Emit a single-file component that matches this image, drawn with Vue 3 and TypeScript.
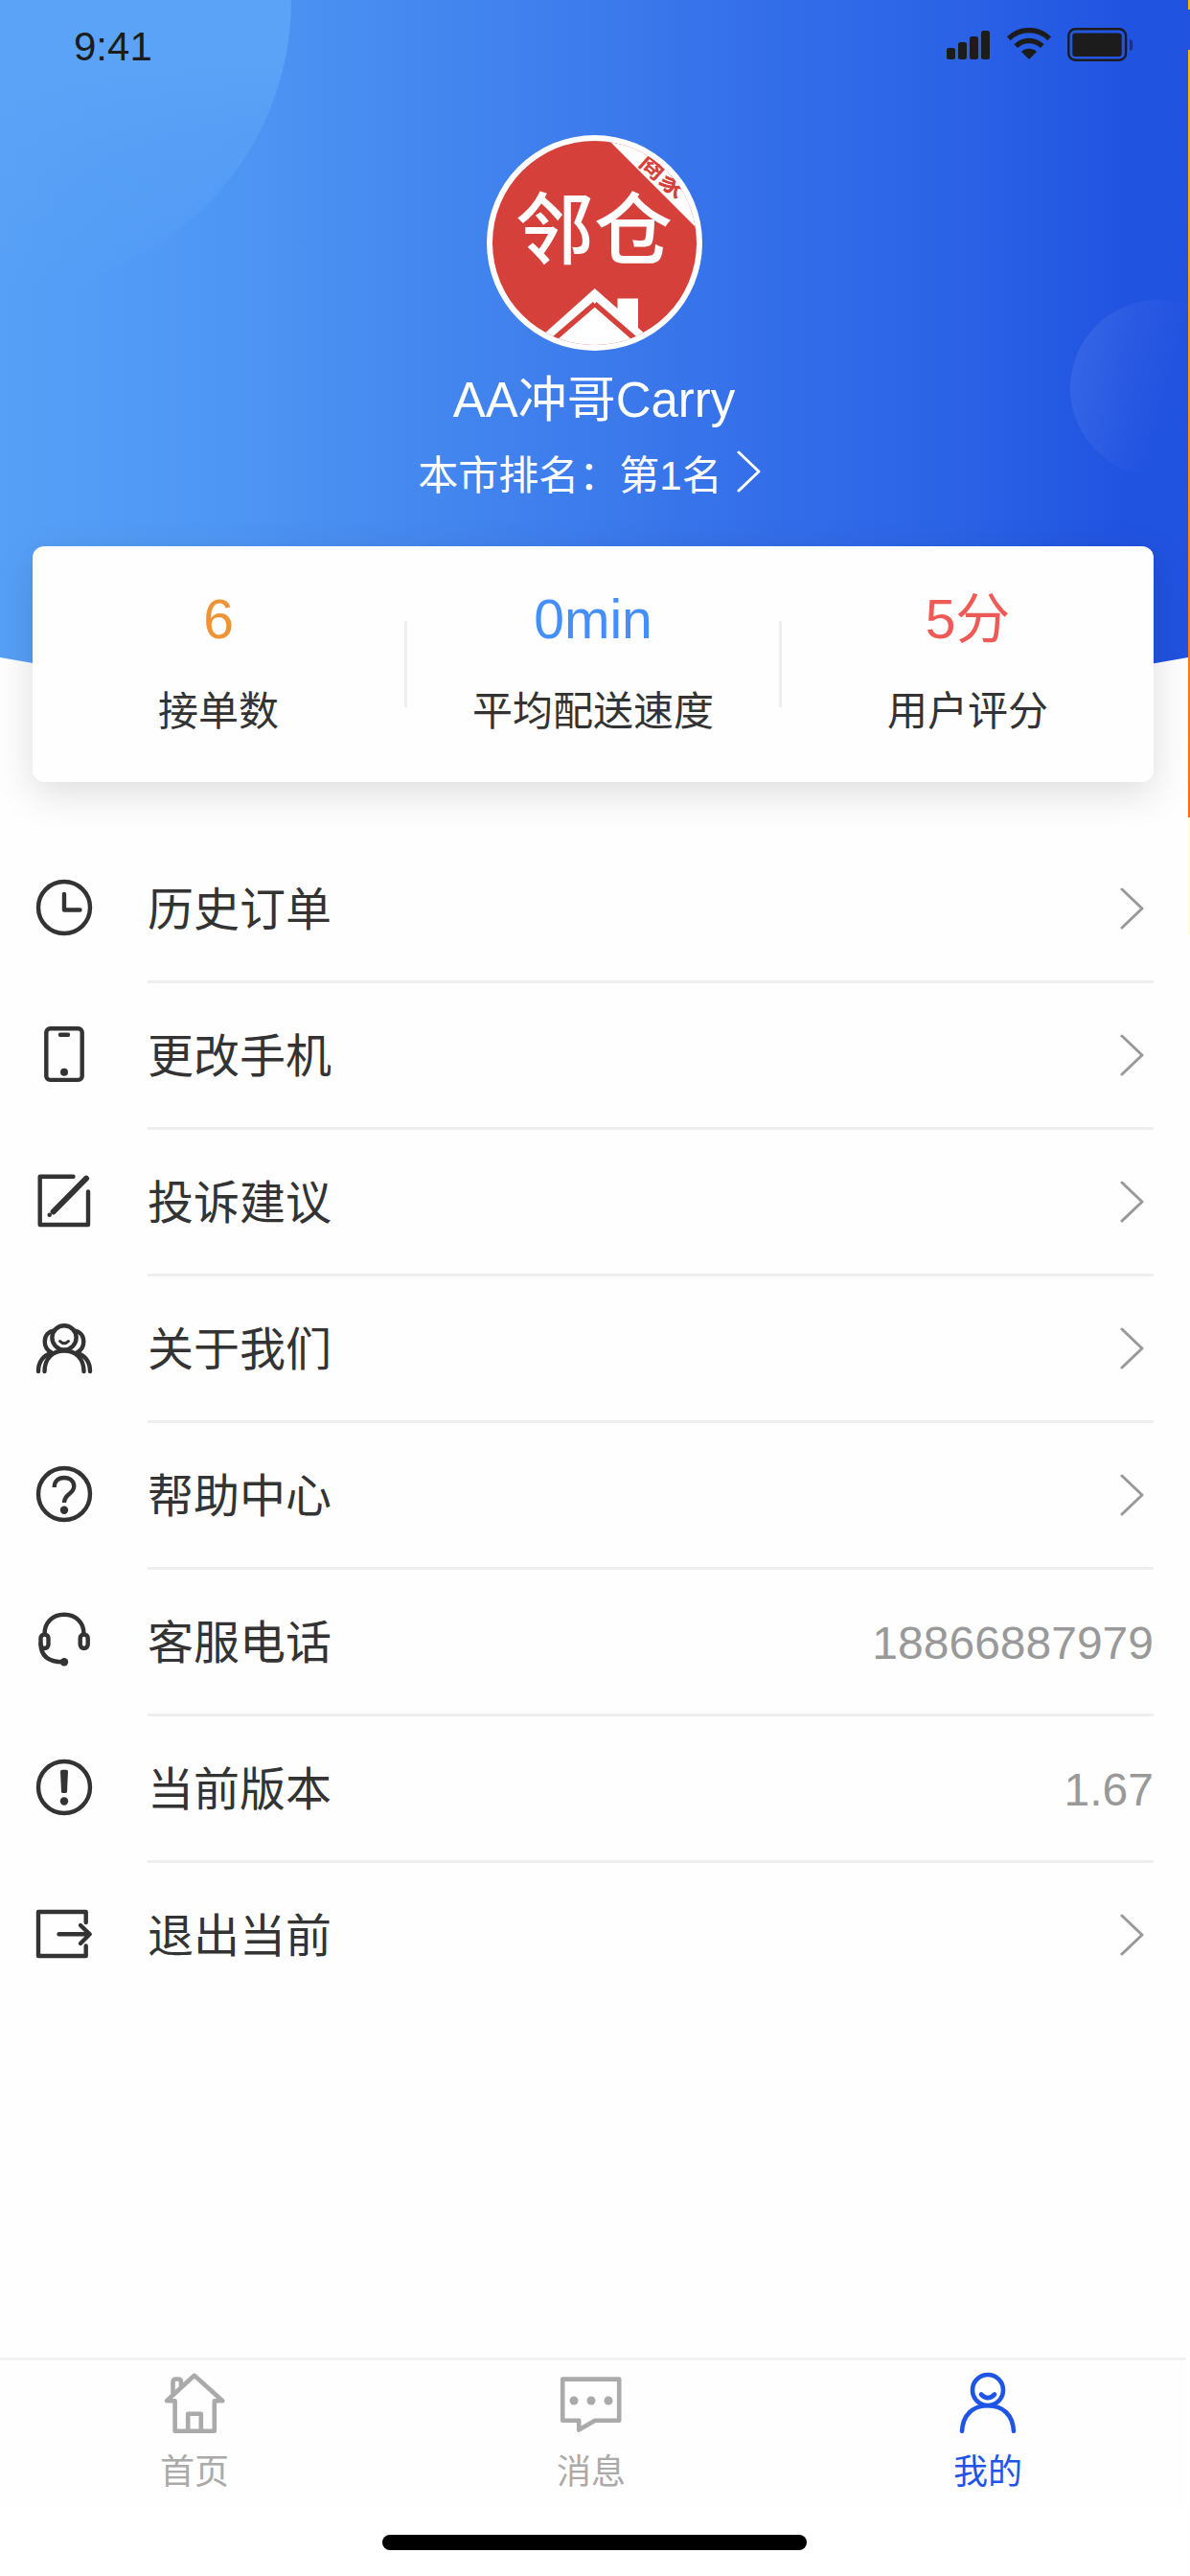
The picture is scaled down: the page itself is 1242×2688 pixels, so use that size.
<script setup lang="ts">
import { ref } from 'vue'

interface Stat {
  value: string
  label: string
  tone: string
}

interface MenuItem {
  icon: string
  label: string
  value?: string
}

interface Tab {
  icon: string
  label: string
}

const stats: Stat[] = [
  { value: '6', label: '接单数', tone: 'orange' },
  { value: '0min', label: '平均配送速度', tone: 'blue' },
  { value: '5分', label: '用户评分', tone: 'red' },
]

const menu: MenuItem[] = [
  { icon: 'clock', label: '历史订单' },
  { icon: 'mobile', label: '更改手机' },
  { icon: 'edit', label: '投诉建议' },
  { icon: 'people', label: '关于我们' },
  { icon: 'help', label: '帮助中心' },
  { icon: 'headset', label: '客服电话', value: '18866887979' },
  { icon: 'notice', label: '当前版本', value: '1.67' },
  { icon: 'exit', label: '退出当前' },
]

const tabs: Tab[] = [
  { icon: 'home', label: '首页' },
  { icon: 'message', label: '消息' },
  { icon: 'mine', label: '我的' },
]

const activeTab = ref('mine')
</script>

<template>
  <div class="page">
    <svg class="backdrop" viewBox="0 0 1240 745" preserveAspectRatio="none" aria-hidden="true">
      <defs>
        <linearGradient id="sky" x1="0" y1="0" x2="1" y2="0">
          <stop offset="0" stop-color="#57a0f7" />
          <stop offset="0.18" stop-color="#4f97f4" />
          <stop offset="0.4" stop-color="#4284ee" />
          <stop offset="0.6" stop-color="#3672ea" />
          <stop offset="0.8" stop-color="#2b63e6" />
          <stop offset="0.95" stop-color="#2153e1" />
          <stop offset="1" stop-color="#2152e0" />
        </linearGradient>
        <linearGradient id="bubble" x1="0" y1="0.3" x2="1" y2="0.6">
          <stop offset="0" stop-color="#ffffff" stop-opacity="0.08" />
          <stop offset="0.6" stop-color="#ffffff" stop-opacity="0" />
        </linearGradient>
        <linearGradient id="corner" x1="0" y1="0" x2="0" y2="1">
          <stop offset="0.6" stop-color="#5ba3f7" />
          <stop offset="1" stop-color="#5ba3f7" stop-opacity="0" />
        </linearGradient>
      </defs>
      <path d="M0 0H1240V686Q620 800 0 686Z" fill="url(#sky)" />
      <circle cx="0" cy="0" r="304" fill="url(#corner)" />
      <circle cx="1209" cy="405" r="92" fill="url(#bubble)" />
    </svg>
    <div class="edge" aria-hidden="true"></div>

    <header class="profile">
      <div class="status">
        <span class="time">9:41</span>
        <div class="signals">
          <svg width="46" height="36" viewBox="0 0 46 36" fill="#1c1c1c" aria-hidden="true">
            <rect x="0" y="21" width="9" height="12" rx="2.5" />
            <rect x="12" y="15" width="9" height="18" rx="2.5" />
            <rect x="24" y="9" width="9" height="24" rx="2.5" />
            <rect x="36" y="3" width="9" height="30" rx="2.5" />
          </svg>
          <svg width="48" height="36" viewBox="0 0 48 36" fill="none" stroke="#1c1c1c" stroke-width="5.4" aria-hidden="true">
            <path d="M2.8 11.2A30.5 30.5 0 0 1 45.2 11.2" />
            <path d="M10.2 19.2A19.5 19.5 0 0 1 37.8 19.2" />
            <path d="M24 33L16 25A11.3 11.3 0 0 1 32 25Z" fill="#1c1c1c" stroke="none" />
          </svg>
          <svg width="70" height="36" viewBox="0 0 70 36" aria-hidden="true">
            <rect x="1.3" y="1.3" width="59.8" height="32.4" rx="7" fill="none" stroke="#1c1c1c" stroke-width="2.4" />
            <rect x="5.3" y="5.6" width="51.4" height="24.4" rx="3" fill="#1c1c1c" />
            <path d="M65 12Q68 12.5 68 15V21Q68 23.5 65 24Z" fill="#1c1c1c" fill-opacity="0.6" />
          </svg>
        </div>
      </div>

      <svg class="avatar" viewBox="0 0 225 225" role="img" aria-label="邻仓商家">
        <defs>
          <clipPath id="face"><circle cx="112.5" cy="112.5" r="106.5" /></clipPath>
        </defs>
        <circle cx="112.5" cy="112.5" r="112.5" fill="#fff" />
        <g clip-path="url(#face)">
          <rect width="225" height="225" fill="#d5403b" />
          <path d="M122 0L225 103V0Z" fill="#fff" />
          <text class="ribbon" transform="translate(184 42) rotate(42)" x="0" y="9">商家</text>
          <text class="brand" x="112" y="128">邻仓</text>
          <path d="M112.7 160L136.5 181V170.5H158V201L186 226H39Z" fill="#fff" />
          <path d="M112.7 176L56 225M112.7 176L169 225" fill="none" stroke="#d5403b" stroke-width="5.6" />
        </g>
      </svg>

      <h1 class="name">AA冲哥Carry</h1>
      <button class="rank" type="button">
        <span>本市排名：第1名</span>
        <svg class="chevron" viewBox="0 0 48 44" aria-hidden="true"><path d="M15 2L36 22L15 42" /></svg>
      </button>
    </header>

    <section class="stats">
      <template v-for="(stat, i) in stats" :key="stat.label">
        <span v-if="i > 0" class="rule"></span>
        <div class="stat">
          <strong :class="stat.tone">{{ stat.value }}</strong>
          <span>{{ stat.label }}</span>
        </div>
      </template>
    </section>

    <ul class="menu">
      <li v-for="item in menu" :key="item.label">
        <button class="row" type="button">
          <svg class="icon" viewBox="0 0 66 66" aria-hidden="true">
            <g v-if="item.icon === 'clock'">
              <circle cx="33" cy="32" r="27" />
              <path d="M33 18V34.5H49.5" />
            </g>
            <g v-else-if="item.icon === 'mobile'">
              <rect x="14.3" y="5.3" width="37.4" height="53.6" rx="4" />
              <path d="M29 11.8H37" />
              <circle class="dot" cx="33" cy="50.7" r="4" />
            </g>
            <g v-else-if="item.icon === 'edit'">
              <path d="M42.5 6.8H7.7V57H58V22.5" />
              <path d="M56 8.7L21.7 43.3" stroke-width="6" />
              <circle class="dot" cx="17.7" cy="46.7" r="2.3" />
            </g>
            <g v-else-if="item.icon === 'people'">
              <circle cx="33" cy="21.8" r="12.6" />
              <path d="M28.5 25.5Q33 30 37.5 25.5" stroke-width="3" />
              <path d="M12.5 57C12.5 43.5 21 35.5 33 35.5S53.5 43.5 53.5 57" />
              <path d="M22.5 14.3C16.5 15.3 12.7 20 12.7 26C12.7 31 15 35 20 37.5C11 40.5 6 47 6 57" />
              <path d="M43.5 14.3C49.5 15.3 53.3 20 53.3 26C53.3 31 51 35 46 37.5C55 40.5 60 47 60 57" />
            </g>
            <g v-else-if="item.icon === 'help'">
              <circle cx="33" cy="32" r="27" />
              <path d="M22.7 25C22.7 18.5 27 15 33 15C39 15 43.2 18.5 43.2 24C43.2 32 33 31.5 33 41" stroke-linecap="butt" />
              <circle class="dot" cx="33" cy="48.7" r="4.2" />
            </g>
            <g v-else-if="item.icon === 'headset'">
              <path d="M12.5 25C12.5 13 21 4.8 33 4.8S53.5 13 53.5 25" />
              <rect x="8.5" y="25.5" width="8" height="14.5" rx="4" />
              <rect x="49.7" y="25.5" width="8" height="14.5" rx="4" />
              <path d="M8.5 35C8.5 48 17 54.3 32 54.3" />
              <circle class="dot" cx="33" cy="54.3" r="4.2" />
            </g>
            <g v-else-if="item.icon === 'notice'">
              <circle cx="33" cy="32" r="27" />
              <path class="dot" d="M29 15.5Q29 13.7 31 13.7H35Q37 13.7 37 15.5L36 36.5Q35.8 38 34.5 38H31.5Q30.2 38 30 36.5Z" />
              <circle class="dot" cx="33" cy="46.5" r="4.2" />
            </g>
            <g v-else>
              <path d="M55.7 20V9H6V55H55.7V44.5" />
              <path d="M27.5 32.3H59.5M50 23L59.7 32.3L50 42" />
            </g>
          </svg>
          <span class="label">{{ item.label }}</span>
          <span v-if="item.value" class="value">{{ item.value }}</span>
          <svg v-else class="chevron" viewBox="0 0 48 44" aria-hidden="true"><path d="M15 2L36 22L15 42" /></svg>
        </button>
      </li>
    </ul>

    <footer class="footer">
      <nav class="tabs">
        <button
          v-for="tab in tabs"
          :key="tab.icon"
          type="button"
          class="tab"
          :class="{ active: tab.icon === activeTab }"
          @click="activeTab = tab.icon"
        >
          <svg viewBox="0 0 66 66" aria-hidden="true">
            <g v-if="tab.icon === 'home'">
              <path d="M32.8 3.8L4 30.3H12.6V61.8H53.8V30.3H62.3Z" />
              <path d="M10.5 24V11Q10.5 7.5 13.5 7.5H16Q19 7.5 19 11V15M26.2 61V43.8H39.8V61" />
            </g>
            <g v-else-if="tab.icon === 'message'">
              <path d="M3.2 7.6H62.2V50.7H37L20.2 60.5V50.7H3.2Z" />
              <g class="dots">
                <circle cx="15" cy="30" r="4.5" />
                <circle cx="33" cy="30" r="4.5" />
                <circle cx="51" cy="30" r="4.5" />
              </g>
            </g>
            <g v-else>
              <circle cx="33" cy="19" r="16" />
              <path d="M26 23.5Q33 30.5 40 23.5" />
              <path d="M6 61.8C7 45 17 35.3 33 35.3S59 45 60 61.8" />
            </g>
          </svg>
          <span>{{ tab.label }}</span>
        </button>
      </nav>
      <div class="home-indicator"></div>
    </footer>
  </div>
</template>

<style>
body {
  margin: 0;
  background: #fff;
}
</style>

<style scoped>
.page {
  position: relative;
  display: flex;
  flex-direction: column;
  min-height: 100vh;
  box-sizing: border-box;
  padding-right: 2px;
  overflow: hidden;
  background: #fefefe;
  color: #333;
  font-family: 'Liberation Sans', 'Noto Sans CJK SC', sans-serif;
}

button {
  margin: 0;
  padding: 0;
  border: 0;
  background: none;
  color: inherit;
  font: inherit;
  cursor: pointer;
}

svg {
  display: block;
  flex: none;
}

.backdrop {
  position: absolute;
  top: 0;
  left: 0;
  width: calc(100% - 2px);
  height: 745px;
}

.edge {
  position: absolute;
  top: 0;
  right: 0;
  width: 2px;
  height: 975px;
  background: linear-gradient(#ffb400 10px, #2152e0 10px 52px, #ffb800 52px, #ff6a10 853px, #fffbdc 853px);
}

.profile {
  position: relative;
  display: flex;
  flex-direction: column;
  align-items: center;
  color: #fff;
}

.status {
  display: flex;
  align-self: stretch;
  justify-content: space-between;
  padding: 29px 56px 0 77px;
}

.time {
  color: #1c1c1c;
  font-size: 42px;
  line-height: 40px;
}

.signals {
  display: flex;
  gap: 16px;
}

.avatar {
  width: 225px;
  height: 225px;
  margin-top: 72px;
}

.brand {
  fill: #fff;
  font-family: 'Noto Sans CJK SC', sans-serif;
  font-size: 82px;
  font-weight: 500;
  text-anchor: middle;
}

.ribbon {
  fill: #d5403b;
  font-family: 'Noto Sans CJK SC', sans-serif;
  font-size: 28px;
  font-weight: 700;
  text-anchor: middle;
}

.name {
  margin: 22px 0 0;
  font-size: 51px;
  font-weight: 400;
  line-height: 60px;
}

.rank {
  display: flex;
  align-items: flex-start;
  gap: 2px;
  margin-top: 22px;
  font-size: 42px;
  line-height: 54px;
}

.chevron {
  width: 48px;
  height: 44px;
  fill: none;
  stroke: currentColor;
  stroke-width: 3;
  stroke-linecap: round;
  stroke-linejoin: round;
}

.stats {
  position: relative;
  display: flex;
  align-items: center;
  margin: 46px 36px 0 34px;
  padding: 46px 0;
  border-radius: 12px;
  background: #fefefe;
  box-shadow: 0 12px 40px rgba(0, 0, 0, 0.13);
}

.stat {
  display: flex;
  flex: 1 1 0;
  flex-direction: column;
  align-items: center;
  gap: 40px;
  font-size: 42px;
  line-height: 54px;
}

.stat strong {
  font-size: 57px;
  font-weight: 400;
  line-height: 60px;
}

.orange {
  color: #ee9336;
}

.blue {
  color: #448ffb;
}

.red {
  color: #ee5a55;
}

.rule {
  width: 3px;
  height: 90px;
  background: #eee;
}

.menu {
  margin: 57px 36px 0 34px;
  padding: 0;
  list-style: none;
}

.menu li + li::before {
  display: block;
  height: 3px;
  margin-left: 120px;
  background: #eee;
  content: '';
}

.row {
  display: flex;
  align-items: center;
  width: 100%;
  height: 150px;
  font-size: 48px;
  line-height: 60px;
  text-align: left;
}

.icon {
  width: 66px;
  height: 66px;
  margin-right: 54px;
  fill: none;
  stroke: #333;
  stroke-width: 4.4;
  stroke-linecap: round;
  stroke-linejoin: round;
}

.dot {
  fill: #333;
  stroke: none;
}

.label,
.value {
  padding-top: 4px;
}

.label {
  flex: 1;
}

.value,
.row .chevron {
  color: #999;
}

.footer {
  margin-top: auto;
  background: #fff;
}

.tabs {
  display: flex;
  margin: 0 2px 0 -4px;
  border-top: 3px solid #f2f2f2;
  background: #fefefe;
}

.tab {
  display: flex;
  flex: 1 1 0;
  flex-direction: column;
  align-items: center;
  gap: 14px;
  padding: 12px 0;
  color: #aaa;
  font-size: 36px;
  line-height: 50px;
}

.tab.active {
  color: #1f55e6;
}

.tab svg {
  width: 66px;
  height: 66px;
  fill: none;
  stroke: currentColor;
  stroke-width: 4.6;
  stroke-linecap: round;
  stroke-linejoin: round;
}

.dots {
  fill: currentColor;
  stroke: none;
}

.home-indicator {
  width: 443px;
  height: 16px;
  margin: 28px auto 27px;
  border-radius: 8px;
  background: #000;
}
</style>
